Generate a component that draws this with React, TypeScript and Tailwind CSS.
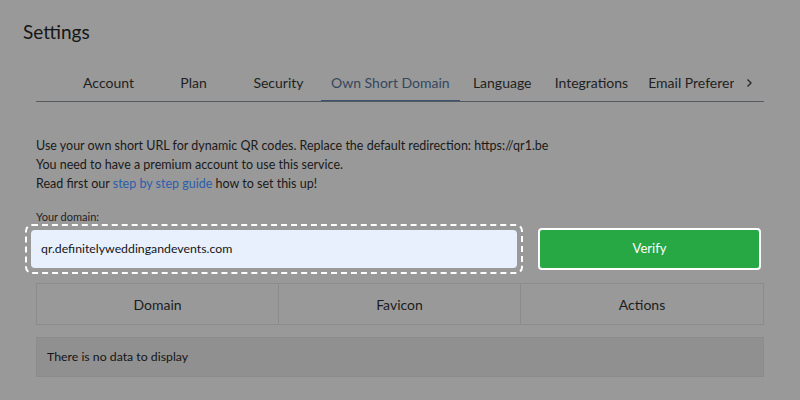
import React from 'react';

const tabs = ['Account', 'Plan', 'Security', 'Own Short Domain', 'Language', 'Integrations', 'Email Preferences'];
const active = 'Own Short Domain';

const Tabs: React.FC = () => (
  <div className="mx-[36px] flex h-[40px] border-b border-[#555a61]">
    <div className="w-[30px] shrink-0" />
    <div className="flex flex-1 overflow-hidden">
      {tabs.map((t) => (
        <div
          key={t}
          className={
            t === active
              ? 'min-w-[85px] shrink-0 px-[10px] pt-[2px] flex items-center justify-center whitespace-nowrap text-[14px] text-[#34475f] border-b-2 border-[#3d5170] -mb-px'
              : 'min-w-[85px] shrink-0 px-[10px] pt-[2px] flex items-center justify-center whitespace-nowrap text-[14px] text-[#1f1f1f]'
          }
        >
          {t}
        </div>
      ))}
    </div>
    <div className="w-[30px] shrink-0 pt-[2px] flex items-center justify-center text-[#2a2a2a]">
      <svg width="10" height="10" viewBox="0 0 10 10" fill="none" stroke="currentColor" strokeWidth="1.4">
        <path d="M3.5 1.5 L7 5 L3.5 8.5" />
      </svg>
    </div>
  </div>
);

export default function App() {
  return (
    <div className="w-[800px] h-[400px] overflow-hidden bg-[#999999] text-[#1c1c1c]" style={{ fontFamily: 'Lato, "Open Sans", sans-serif' }}>
      <h1 className="pl-[23px] pt-[20px] h-[62px] text-[19px] leading-[24px] text-[#161616]">Settings</h1>
      <Tabs />
      <div className="px-[36px] pt-[34px] text-[12.5px] leading-[19px] text-[#1a1a1a]">
        <p>Use your own short URL for dynamic QR codes. Replace the default redirection: https://qr1.be</p>
        <p>You need to have a premium account to use this service.</p>
        <p>
          Read first our <span className="text-[#2b5ea9]">step by step guide</span> how to set this up!
        </p>
        <div className="mt-[17px] text-[11px] leading-[14px] text-[#1f1f1f]">Your domain:</div>
      </div>
      <div className="flex items-center pl-[25px] pr-[39px]">
        <div className="w-[498px] h-[50px] p-[4px] rounded-[7px] border-2 border-dashed border-white">
          <div className="h-full rounded-[4px] bg-[#e8f0fe] flex items-center pl-[10px] text-[12.3px] text-[#151515]">
            <span>qr.definitelyweddingandevents.com</span>
          </div>
        </div>
        <div className="ml-[15px] flex-1 h-[42px] rounded-[4px] border-2 border-white bg-[#28a745] flex items-center justify-center text-[13px] text-white">
          Verify
        </div>
      </div>
      <div className="mx-[36px] mt-[9px] grid grid-cols-3 h-[42px] border border-[#8c8c8c] text-[14px] text-[#1c1c1c]">
        <div className="flex items-center justify-center border-r border-[#8c8c8c]">Domain</div>
        <div className="flex items-center justify-center border-r border-[#8c8c8c]">Favicon</div>
        <div className="flex items-center justify-center">Actions</div>
      </div>
      <div className="mx-[36px] mt-[12px] h-[40px] bg-[#909090] border border-[#8c8c8c] flex items-center pl-[10px] text-[12.3px] text-[#151515]">
        There is no data to display
      </div>
    </div>
  );
}
